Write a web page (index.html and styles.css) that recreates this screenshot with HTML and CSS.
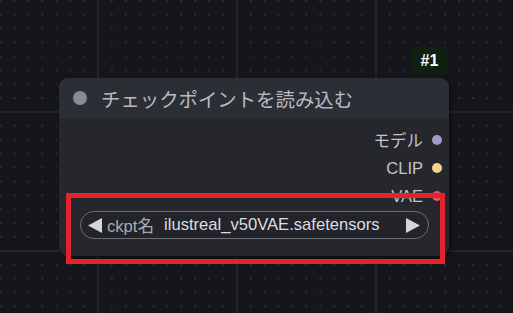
FILE: index.html
```html
<!DOCTYPE html>
<html>
<head>
    <title>Load Checkpoint Node</title>
    <link rel="stylesheet" href="styles.css">
</head>
<body>
    <div class="canvas">
        <div class="badge">#1</div>
        <div class="node">
            <div class="node-title">
                <span class="title-dot"></span>
                <span class="title-text">チェックポイントを読み込む</span>
            </div>
            <div class="node-body">
                <div class="output"><span>モデル</span><span class="slot slot-model"></span></div>
                <div class="output"><span>CLIP</span><span class="slot slot-clip"></span></div>
                <div class="output"><span>VAE</span><span class="slot slot-vae"></span></div>
                <div class="combo">
                    <svg class="arrow" width="14" height="15" viewBox="0 0 14 15"><polygon points="14,0 14,15 0,7.5" fill="#d4d5d8"/></svg>
                    <span class="combo-label">ckpt名</span>
                    <span class="combo-value">ilustreal_v50VAE.safetensors</span>
                    <span class="spacer"></span>
                    <svg class="arrow" width="14" height="15" viewBox="0 0 14 15"><polygon points="0,0 0,15 14,7.5" fill="#d4d5d8"/></svg>
                </div>
            </div>
        </div>
        <div class="highlight"></div>
    </div>
</body>
</html>
```

FILE: styles.css
```css
body { margin: 0; background: #15161c; font-family: "Liberation Sans", "Noto Sans CJK JP", sans-serif; }
.canvas {
    position: relative; width: 513px; height: 313px; overflow: hidden;
    background-color: #15161c;
    background-image:
        linear-gradient(to right, #22242c 2px, transparent 2px),
        linear-gradient(to bottom, #22242c 2px, transparent 2px),
        radial-gradient(circle, #2a2c35 1px, transparent 1.4px);
    background-size: 139px 139px, 139px 139px, 13.9px 13.9px;
    background-position: 97px 0, 0 111px, 91px 105px;
}
.badge {
    position: absolute; left: 412px; top: 47px; width: 35px; height: 27px;
    background: #0f1f10; color: #ffffff; font-weight: bold; font-size: 16px;
    display: flex; align-items: center; justify-content: center; border-radius: 3px 3px 0 0;
}
.node {
    position: absolute; left: 59px; top: 78px; width: 390px; height: 178px;
    background: #25272d; border-radius: 9px; overflow: hidden;
    box-shadow: 2px 2px 4px rgba(0, 0, 0, 0.5);
    display: flex; flex-direction: column;
}
.node-title {
    height: 40px; background: #2c2e35; display: flex; align-items: center;
    padding-left: 14px; gap: 14px;
}
.title-dot { width: 14px; height: 14px; border-radius: 50%; background: #8a8c93; }
.title-text { font-family: "Noto Sans CJK JP", sans-serif; font-size: 19.4px; color: #b9bbc1; }
.node-body { display: flex; flex-direction: column; padding: 8px 20px 0 21px; }
.output {
    height: 28px; display: flex; align-items: center; justify-content: flex-end;
    gap: 9px; margin-right: -13px; font-size: 16.5px; color: #c3c5ca;
}
.slot { width: 10px; height: 10px; border-radius: 50%; }
.slot-model { background: #a597c9; }
.slot-clip { background: #f2d38e; }
.slot-vae { background: #e0565f; }
.combo {
    margin-top: 1px; height: 28px; box-sizing: border-box;
    border: 1.5px solid #6b6e75; border-radius: 14px; background: #222429;
    display: flex; align-items: center; padding: 0 8px 0 7px; font-size: 16.6px;
}
.arrow { display: block; }
.combo-label { margin-left: 5px; color: #a8abb1; }
.combo-value { margin-left: 10px; color: #dcdde0; }
.spacer { flex: 1; }
.highlight {
    position: absolute; left: 66px; top: 193px; width: 379px; height: 71px;
    box-sizing: border-box; border: 5px solid #e3222e;
}
```
